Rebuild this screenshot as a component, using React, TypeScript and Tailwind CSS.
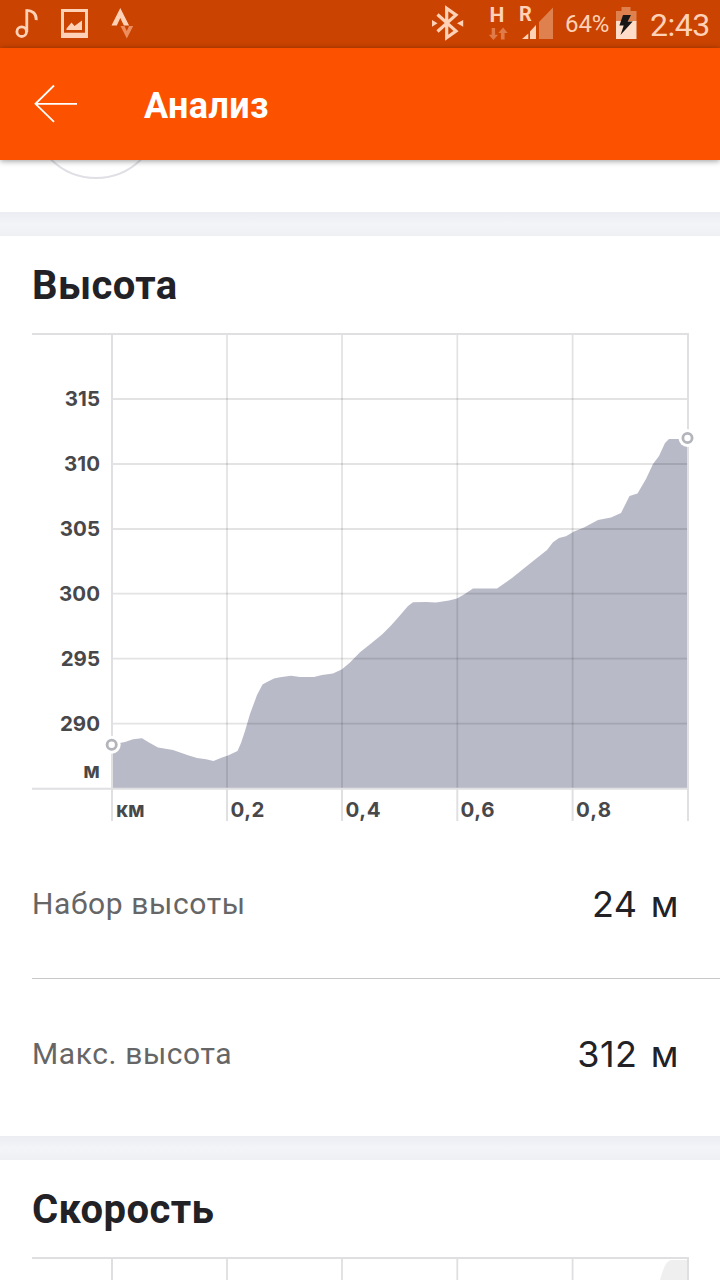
import React from "react";

const PEACH = "#ffd2b8";

const columns = [112, 227, 342, 457.3, 572.6, 688];
const elevations = [
  { label: "315", y: 399 },
  { label: "310", y: 464 },
  { label: "305", y: 529 },
  { label: "300", y: 593.6 },
  { label: "295", y: 658.6 },
  { label: "290", y: 723.6 },
];
const distances = [
  { label: "0,2", x: 230.5, w: 34 },
  { label: "0,4", x: 345.5, w: 35 },
  { label: "0,6", x: 460.5, w: 34 },
  { label: "0,8", x: 576, w: 35 },
];

function StatusBar() {
  return (
    <div className="flex h-12 w-full shrink-0 items-stretch bg-[#ca4300]">
      <svg className="ml-3 h-12 w-[30px]" viewBox="12 0 30 48" fill="none" stroke={PEACH} strokeWidth="2.8">
        <circle cx="21.7" cy="31.7" r="4.8" />
        <path d="M26.8 32V9.2M26.8 10.3c5 0 9.8 3 9.5 9.8" />
      </svg>
      <svg className="ml-4 h-12 w-8" viewBox="58 0 32 48" fill={PEACH}>
        <path fillRule="evenodd" d="M61 9h27v29H61zM64 12v20.7h21V12z" />
        <path d="M66.5 30l0-1.5 5-6 3 3.5 7.5-5.5V30z" />
      </svg>
      <svg className="ml-4 h-12 w-8" viewBox="106 0 32 48">
        <path d="M120.3 8l8.8 17.5h-5.2L120.3 18l-3.5 7.5h-5.3z" fill={PEACH} />
        <path d="M120.5 26h4l2.3 5 2.2-5h4.2l-6.4 12.5z" fill="#ed8c5d" />
      </svg>
      <svg className="ml-[290px] h-12 w-10" viewBox="428 0 40 48">
        <path d="M437.5 14.5L456 31l-9.3 6.7V8.3L456 15l-18.5 16.5" fill="none" stroke={PEACH} strokeWidth="3.2" />
        <path d="M432 20l5.5 3.3-5.5 3.4zM463.2 20v6.7l-6.2-3.4z" fill={PEACH} />
      </svg>
      <div className="ml-[17px] flex w-6 flex-col items-center">
        <span className="mt-[5px] h-[20px] font-[Roboto] text-[21px] leading-[21px] font-bold text-[#ffd2b8]">H</span>
        <svg className="mt-[2px] h-[13px] w-6" viewBox="485 27 24 13" fill="#e07b49">
          <path d="M491.7 28h3.4v6.7h3L493.4 40l-4.6-5.3h2.9zM500.9 39.5v-6.6h-2.6l4.8-5.4 4.6 5.4h-3.1v6.6z" />
        </svg>
      </div>
      <div className="relative ml-[9px] h-12 w-9">
        <svg className="h-12 w-9" viewBox="518 0 36 48">
          <path d="M553 7.5V39h-14V22z" fill="#df814f" />
          <path d="M536 25v14h-6v-7.5zM528.3 33.5V39H522z" fill={PEACH} />
        </svg>
        <span className="absolute top-[4px] left-px font-[Roboto] text-[20px] leading-[21px] font-bold text-[#ffd2b8]">R</span>
      </div>
      <span className="ml-[11px] w-[50px] font-[Roboto] text-[24px] leading-[49px] tracking-[-0.1px] text-[#ffd2b8]">64%</span>
      <svg className="h-12 w-6" viewBox="615 0 24 48">
        <path d="M621.5 7h9v4h6v11H616V11h5.5z" fill="#df814f" />
        <path d="M616 21h20.5v18H616z" fill="#ffddc9" />
        <path d="M623 15h8l-3.3 6.5h5L620.5 35l3.2-9.6h-4.3z" fill="#191716" />
      </svg>
      <span className="ml-[11px] font-[Roboto] text-[32px] leading-[51px] tracking-[-0.5px] text-[#ffd2b8]">2:43</span>
    </div>
  );
}

function Divider() {
  return <div className="h-6 w-full shrink-0 bg-linear-to-b from-[#ecedf2] via-[#f2f4f8] to-[#eff0f4]" />;
}

function ElevationChart() {
  return (
    <svg className="h-[500px] w-[720px] shrink-0" viewBox="0 326 720 500">
      <path
        fill="#b8bac7"
        d="M112 788V745L121 742.8 125 742 133 739.3 142 738.3 149 742.5 158 747.5 173 750 188 755.3 197 758 206 759.3 213.5 761 222 757.5 228 755.5 237.5 751 241 743 245 731 250 714 257 695 262.5 684.6 267 682 274 678.5 280 677.2 291 675.7 300 677 314 677 322 675 333 673.5 342 669.3 350 662.5 360 652.3 371 643.5 382 634.5 391 625.5 399 616.5 408 606 413 602.3 426 602 436 602.5 449 600.5 457 598.5 464 594.5 473 588.5 497 588.5 512 578 530 563.5 547 550 553 542.3 559 538 566 536.3 574 531.5 584 527.5 598 520 611 517.5 621 513 629.5 496 637.5 493.5 646 479 653 464 659 456 665 443 669 439H688V788Z"
      />
      <g stroke="#000" strokeOpacity="0.11" strokeWidth="1.8">
        {elevations.map((row) => (
          <path key={row.label} d={`M113 ${row.y}H687`} />
        ))}
        {columns.slice(1, 5).map((x) => (
          <path key={x} d={`M${x} 335V788`} />
        ))}
      </g>
      <g stroke="#e0e0e2" strokeWidth="2">
        <path d="M32 334H689M112 334V821M688 334V821M32 788.7H689" />
        {columns.slice(1, 5).map((x) => (
          <path key={x} d={`M${x} 789V821`} />
        ))}
      </g>
      {[
        [111.7, 744.7],
        [687.5, 438],
      ].map(([cx, cy]) => (
        <g key={cx}>
          <circle cx={cx} cy={cy} r="9" fill="#fff" />
          <circle cx={cx} cy={cy} r="4.6" fill="#fff" stroke="#b3b4bc" strokeWidth="2.8" />
        </g>
      ))}
      <g className="fill-[#48484b] font-[Inter] text-[20.5px] font-bold">
        {elevations.map((row) => (
          <text key={row.label} x="100" y={row.y + 7.4} textAnchor="end">
            {row.label}
          </text>
        ))}
        <text x="100" y="777.5" textAnchor="end">м</text>
        <text x="116" y="817.3">км</text>
        {distances.map((d) => (
          <text key={d.label} x={d.x} y="817" textLength={d.w}>
            {d.label}
          </text>
        ))}
      </g>
    </svg>
  );
}

function Stat({ label, value }: { label: string; value: string }) {
  return (
    <div className="flex h-[149px] w-full items-center justify-between pr-[41px] pl-8">
      <span className="font-[Roboto] text-[30px] leading-9 tracking-[0.6px] text-[#666]">{label}</span>
      <span className="font-[Inter] text-[36px] leading-9 tracking-[0.4px] text-[#222226] [word-spacing:3px]">{value}</span>
    </div>
  );
}

export default function App() {
  return (
    <div className="flex h-[1280px] w-[720px] flex-col overflow-hidden bg-white">
      <StatusBar />
      <header className="z-10 flex h-28 w-full shrink-0 items-center bg-[#fc5200] shadow-[0_1px_6px_rgba(0,0,0,0.4)]">
        <svg className="ml-8 h-12 w-12" viewBox="32 80 48 48" fill="none" stroke="#fff" strokeWidth="1.8">
          <path d="M77 103.8H35.5M54 85.5L35.5 103.8 54 121.8" />
        </svg>
        <h1 className="ml-16 pt-[3px] font-[Roboto] text-[36px] leading-10 font-bold tracking-[0.4px] text-white">Анализ</h1>
      </header>
      <svg className="h-[52px] w-[720px] shrink-0" viewBox="0 160 720 52">
        <circle cx="96" cy="114" r="64" fill="none" stroke="#dfdfe5" strokeWidth="2" />
      </svg>
      <Divider />
      <section className="flex h-[900px] w-full shrink-0 flex-col">
        <h2 className="h-[90px] shrink-0 pt-[26px] pl-8 font-[Roboto] text-[40px] leading-[48px] font-bold tracking-[0.4px] text-[#222226]">Высота</h2>
        <ElevationChart />
        <div className="mt-[3px]">
          <Stat label="Набор высоты" value="24 м" />
          <div className="ml-8 h-px bg-[#c8c8cc]" />
          <Stat label="Макс. высота" value="312 м" />
        </div>
      </section>
      <Divider />
      <section className="flex w-full shrink-0 flex-col">
        <h2 className="h-[90px] shrink-0 pt-[26px] pl-8 font-[Roboto] text-[40px] leading-[48px] font-bold tracking-[0.4px] text-[#222226]">Скорость</h2>
        <svg className="h-[30px] w-[720px]" viewBox="0 1250 720 30">
          <path d="M660 1280C663 1269 666 1260 672 1260H688V1280Z" fill="#efefef" />
          <path d="M32 1258H689M112 1258V1280M688 1258V1280" stroke="#dfdfe1" strokeWidth="2" />
          <path d="M227 1258V1280M342 1258V1280M457.3 1258V1280M572.6 1258V1280" stroke="#dfdfe1" strokeWidth="1.8" />
        </svg>
      </section>
    </div>
  );
}
